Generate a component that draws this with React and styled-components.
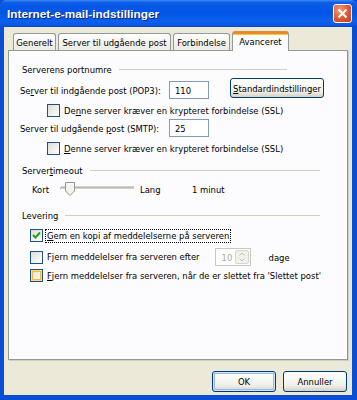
import React from "react";
import styled, { createGlobalStyle, css } from "styled-components";

const Global = createGlobalStyle`
  html, body { margin: 0; padding: 0; background: #fff; }
  body { font-family: "DejaVu Sans Condensed", "Liberation Sans", Arial, sans-serif; font-size: 9.4px; color: #000; }
  * { box-sizing: border-box; }
`;

const Window = styled.div`
  width: 357px;
  height: 400px;
  display: flex;
  flex-direction: column;
  background: #0a4ed6;
`;

const TitleBar = styled.div`
  height: 27px;
  flex: none;
  display: flex;
  align-items: center;
  justify-content: space-between;
  padding: 0 5px 0 7px;
  border-radius: 6px 6px 0 0;
  background: linear-gradient(
    #3c8cf8 0%,
    #0c5ce6 10%,
    #0055e5 45%,
    #0b60ee 80%,
    #0a58e4 92%,
    #0648cc 100%
  );
`;

const Title = styled.span`
  font-family: "Liberation Sans Narrow", "Liberation Sans", Arial, sans-serif;
  font-weight: bold;
  font-size: 11.8px;
  color: #fff;
  text-shadow: 1px 1px #0a1e80;
`;

const CloseButton = styled.div`
  width: 19px;
  height: 19px;
  border: 1px solid #fff;
  border-radius: 3px;
  background: radial-gradient(circle at 35% 30%, #f4a07e 0%, #e2603c 45%, #c63a14 100%);
  display: flex;
  align-items: center;
  justify-content: center;
`;

const Frame = styled.div`
  flex: 1;
  display: flex;
  padding: 0 5px 5px 4px;
`;

const Body = styled.div`
  flex: 1;
  display: flex;
  flex-direction: column;
  background: #ece9d8;
  padding: 4px 4px 0 4px;
`;

const TabStrip = styled.div`
  display: flex;
  align-items: flex-end;
  gap: 2px;
  height: 19px;
  padding-left: 5px;
  position: relative;
  z-index: 1;
`;

const Tab = styled.div`
  width: ${(p) => p.$w}px;
  height: 17px;
  border: 1px solid #919b9c;
  border-bottom: none;
  border-radius: 3px 3px 0 0;
  background: linear-gradient(#ffffff, #f3f2ec 60%, #ebeae3);
  display: flex;
  align-items: center;
  justify-content: center;
  padding-top: 1px;
  white-space: nowrap;
  ${(p) =>
    p.$active &&
    css`
      height: 20px;
      margin-bottom: -1px;
      background: #fcfcfe;
      border-top: 3px solid #e68b2c;
      box-shadow: inset 0 1px #ffc73c;
      padding-top: 0;
      padding-bottom: 2px;
    `}
`;

const Panel = styled.div`
  height: 310px;
  background: #fcfcfe;
  border: 1px solid #919b9c;
  border-right-color: #8c9596;
  box-shadow: 1px 1px #d0cebf;
  padding: 11px 0 0 0;
  display: flex;
  flex-direction: column;
`;

const GroupHeader = styled.div`
  height: 14px;
  display: flex;
  align-items: center;
  margin: ${(p) => p.$mt || 0}px 0 0 13px;
  width: ${(p) => p.$w}px;
  color: #000;
  &::after {
    content: "";
    flex: 1;
    height: 1px;
    margin-left: 7px;
    background: #d0d0bf;
  }
`;

const Row = styled.div`
  display: flex;
  align-items: center;
  height: ${(p) => p.$h || 18}px;
  margin: ${(p) => p.$mt || 0}px 0 0 ${(p) => p.$ml || 0}px;
`;

const Label = styled.span`
  width: ${(p) => (p.$w ? `${p.$w}px` : "auto")};
  margin-left: ${(p) => p.$ml || 0}px;
  flex: none;
  white-space: nowrap;
`;

const Input = styled.div`
  width: 40px;
  height: 18px;
  border: 1px solid #7f9db9;
  background: #fff;
  display: flex;
  align-items: center;
  padding-left: 5px;
  flex: none;
`;

const Button = styled.div`
  width: ${(p) => p.$w}px;
  height: ${(p) => p.$h || 20}px;
  margin: ${(p) => p.$m || 0};
  border: 1px solid #003c74;
  border-radius: 3px;
  background: linear-gradient(#ffffff, #f0f0ea 70%, #d6d0c5);
  display: flex;
  align-items: center;
  justify-content: center;
  flex: none;
  ${(p) =>
    p.$default &&
    css`
      box-shadow: inset 0 0 0 1px #cee7ff, inset 0 0 0 2px #98b8ea;
    `}
`;

const Box = styled.span`
  width: 13px;
  height: 13px;
  flex: none;
  border: 1px solid #1c5180;
  background: linear-gradient(135deg, #dcdcd7 0%, #f2f2ee 60%, #ffffff 100%);
  display: flex;
  align-items: center;
  justify-content: center;
  ${(p) =>
    p.$hover &&
    css`
      box-shadow: inset 0 0 0 1px #fcdd83, inset 0 0 0 2px #f8b636;
    `}
`;

const CheckLabel = styled.span`
  margin-left: 3px;
  white-space: nowrap;
  padding: 0 1px;
  line-height: 12px;
  ${(p) =>
    p.$focus &&
    css`
      outline: 1px dotted #000;
      outline-offset: 0;
    `}
`;

const U = styled.span`
  text-decoration: underline;
`;

const Spinner = styled.div`
  width: 36px;
  height: 18px;
  border: 1px solid #c9c7ba;
  background: #fff;
  display: flex;
  align-items: center;
  justify-content: space-between;
  padding: 1px 1px 1px 6px;
  color: #aca899;
  margin-left: ${(p) => p.$ml}px;
  flex: none;
`;

const SpinArrows = styled.div`
  width: 14px;
  height: 14px;
  border: 1px solid #d8d6cc;
  border-radius: 2px;
  background: #f2f1ea;
  display: flex;
  align-items: center;
  justify-content: center;
`;

const Footer = styled.div`
  display: flex;
  justify-content: flex-end;
  gap: 7px;
  margin-top: 11px;
  padding-right: 1px;
`;

function Check({ checked, hover, focus, children }) {
  return (
    <>
      <Box $hover={hover}>
        {checked && (
          <svg width="9" height="9" viewBox="0 0 9 9">
            <path d="M1 4 L3.5 6.5 L8 1.5" stroke="#21a121" strokeWidth="2" fill="none" />
          </svg>
        )}
      </Box>
      <CheckLabel $focus={focus}>{children}</CheckLabel>
    </>
  );
}

function Slider() {
  return (
    <svg width="80" height="16" viewBox="0 0 80 16" style={{ flex: "none" }}>
      <line x1="1" y1="6" x2="1" y2="9" stroke="#a0a0a0" />
      <rect x="1" y="6" width="73" height="2" fill="#d4d0c8" />
      <line x1="1" y1="6" x2="74" y2="6" stroke="#a7a69c" strokeWidth="1" />
      <line x1="1" y1="8.5" x2="74" y2="8.5" stroke="#ffffff" strokeWidth="1" />
      <path d="M5.5 1.5 H14.5 V10 L10 14.5 L5.5 10 Z" fill="#f4f3ee" stroke="#8d9a8e" strokeWidth="1" />
      <line x1="6.5" y1="3" x2="13.5" y2="3" stroke="#ffffff" />
    </svg>
  );
}

export default function App() {
  return (
    <>
      <Global />
      <Window>
        <TitleBar>
          <Title>Internet-e-mail-indstillinger</Title>
          <CloseButton>
            <svg width="11" height="11" viewBox="0 0 11 11">
              <path d="M1.5 1.5 L9.5 9.5 M9.5 1.5 L1.5 9.5" stroke="#fff" strokeWidth="2" />
            </svg>
          </CloseButton>
        </TitleBar>
        <Frame>
          <Body>
            <TabStrip>
              <Tab $w={43}>Generelt</Tab>
              <Tab $w={113}>Server til udgående post</Tab>
              <Tab $w={57}>Forbindelse</Tab>
              <Tab $w={57} $active>
                Avanceret
              </Tab>
            </TabStrip>
            <Panel>
              <GroupHeader $w={265}>Serverens portnumre</GroupHeader>
              <Row $mt={5} $ml={11} $h={18}>
                <Label $w={149}>
                  Se<U>r</U>ver til indgående post (POP3):
                </Label>
                <Input>110</Input>
                <Button $w={94} $m="-4px 0 0 21px">
                  <span>
                    <U>S</U>tandardindstillinger
                  </span>
                </Button>
              </Row>
              <Row $mt={5} $ml={38} $h={13}>
                <Check>
                  De<U>n</U>ne server kræver en krypteret forbindelse (SSL)
                </Check>
              </Row>
              <Row $mt={2} $ml={11} $h={18}>
                <Label $w={149}>
                  Server til udgående <U>p</U>ost (SMTP):
                </Label>
                <Input>25</Input>
              </Row>
              <Row $mt={5} $ml={38} $h={13}>
                <Check>
                  <U>D</U>enne server kræver en krypteret forbindelse (SSL)
                </Check>
              </Row>
              <GroupHeader $w={298} $mt={8}>
                <span>
                  Server<U>t</U>imeout
                </span>
              </GroupHeader>
              <Row $mt={2} $ml={23} $h={20}>
                <Label $w={28}>Kort</Label>
                <Slider />
                <Label $w={52}>Lang</Label>
                <Label>1 minut</Label>
              </Row>
              <GroupHeader $w={298} $mt={9}>
                Levering
              </GroupHeader>
              <Row $mt={7} $ml={21} $h={13}>
                <Check checked focus>
                  <U>G</U>em en kopi af meddelelserne på serveren
                </Check>
              </Row>
              <Row $mt={6} $ml={21} $h={18}>
                <Check>
                  F<U>j</U>ern meddelelser fra serveren efter
                </Check>
                <Spinner $ml={14}>
                  <span>10</span>
                  <SpinArrows>
                    <svg width="6" height="10" viewBox="0 0 6 10">
                      <path d="M0.5 3.5 L3 1 L5.5 3.5 M0.5 6.5 L3 9 L5.5 6.5" stroke="#c2c0b6" fill="none" />
                    </svg>
                  </SpinArrows>
                </Spinner>
                <Label $ml={18}>dage</Label>
              </Row>
              <Row $mt={3} $ml={21} $h={13}>
                <Check hover>
                  <U>F</U>jern meddelelser fra serveren, når de er slettet fra 'Slettet post'
                </Check>
              </Row>
            </Panel>
            <Footer>
              <Button $w={64} $h={21} $default>
                OK
              </Button>
              <Button $w={64} $h={21}>
                Annuller
              </Button>
            </Footer>
          </Body>
        </Frame>
      </Window>
    </>
  );
}
